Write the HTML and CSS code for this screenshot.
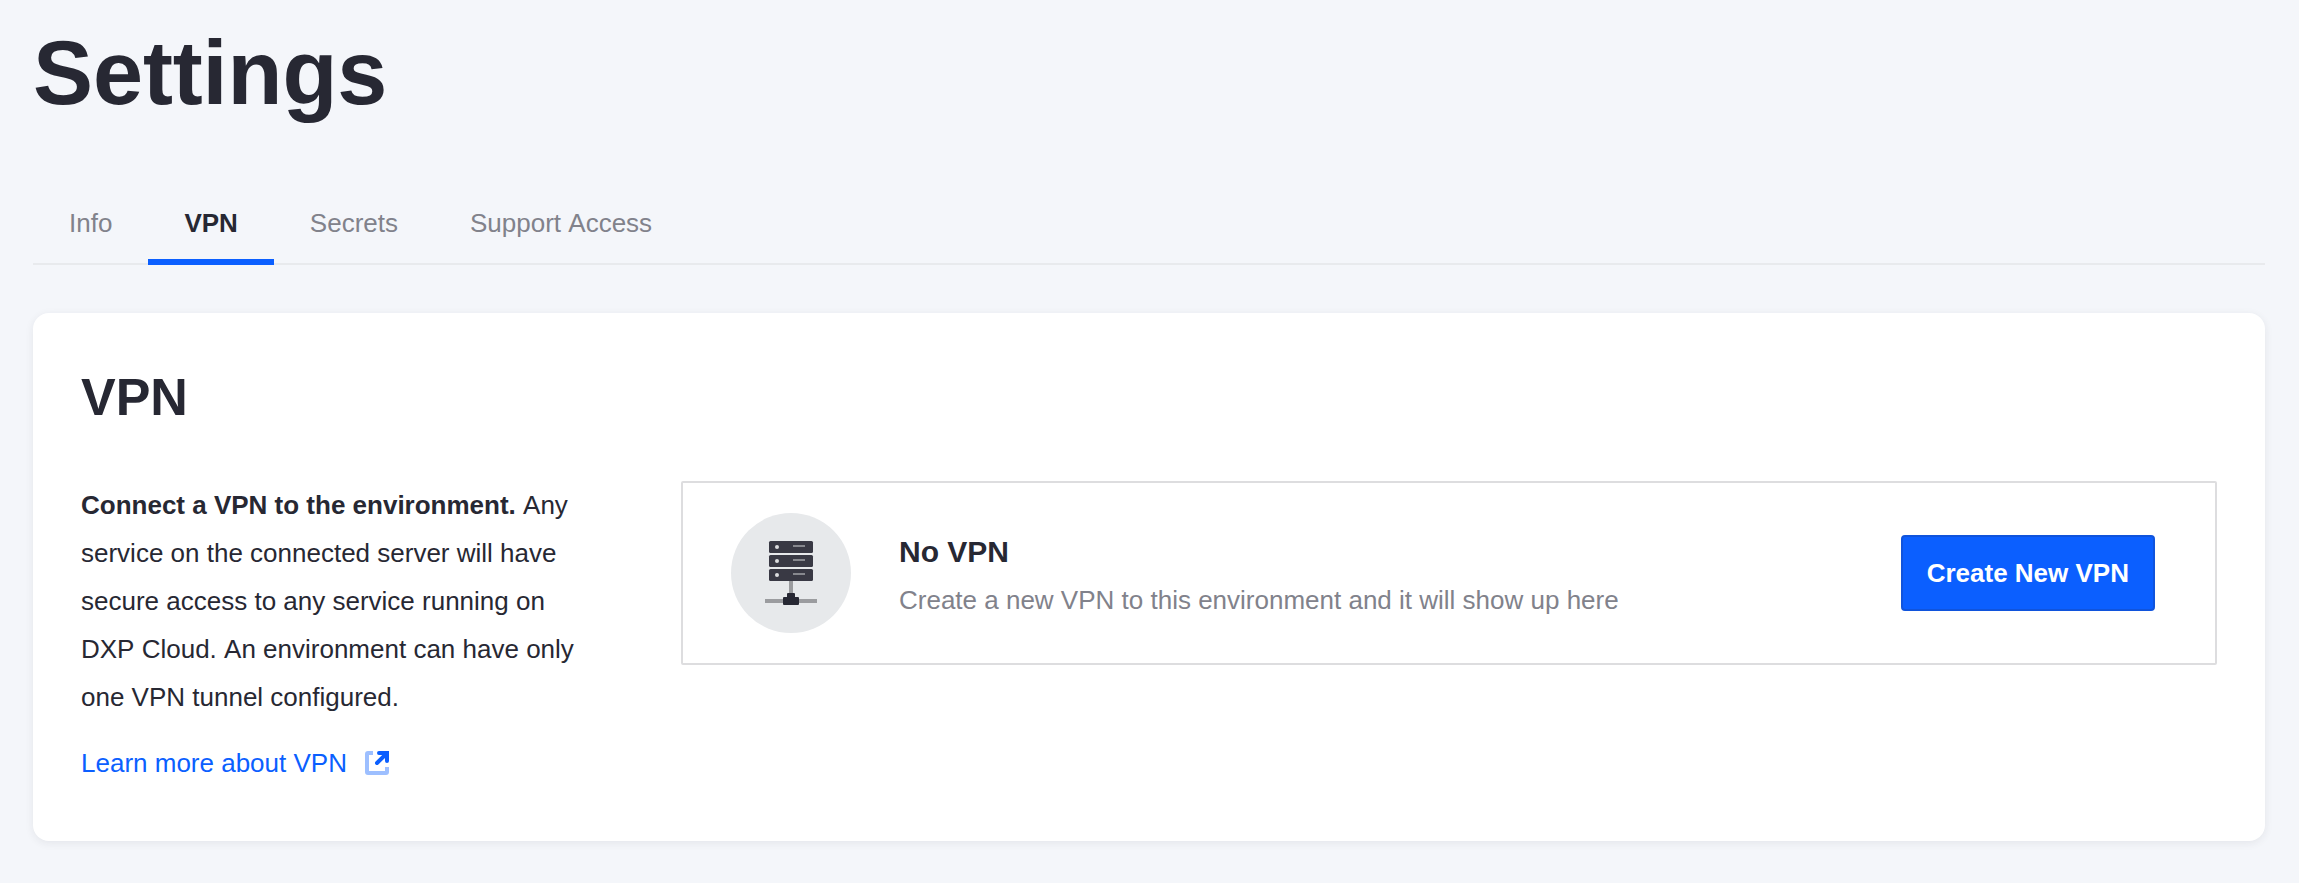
FILE: index.html
```html
<!DOCTYPE html>
<html lang="en">
<head>
<meta charset="utf-8">
<title>Settings</title>
<link rel="stylesheet" href="styles.css">
</head>
<body>
<main class="page">
  <h1 class="page-title">Settings</h1>
  <nav class="tabs">
    <a class="tab">Info</a>
    <a class="tab tab-active">VPN</a>
    <a class="tab">Secrets</a>
    <a class="tab">Support Access</a>
  </nav>
  <section class="card">
    <h2 class="card-title">VPN</h2>
    <div class="card-body">
      <div class="about">
        <p class="about-text"><strong>Connect a VPN to the environment.</strong> Any service on the connected server will have secure access to any service running on DXP Cloud. An environment can have only one VPN tunnel configured.</p>
        <a class="learn-more">Learn more about VPN
          <svg class="link-icon" viewBox="0 0 24 24" width="24" height="24">
            <path d="M8 0H3a3 3 0 0 0-3 3v18a3 3 0 0 0 3 3h18a3 3 0 0 0 3-3v-5h-4v4H4V4h4z" fill="#9dbfff"/>
            <path d="M14 0H24V10a2 2 0 0 1-4 0V7L13.400 13.400a1.900 1.900 0 0 1-2.800-2.800L17.200 4H14a2 2 0 0 1 0-4z" fill="#0b5fff"/>
          </svg>
        </a>
      </div>
      <div class="empty">
        <svg class="server-icon" viewBox="0 0 120 120" width="120" height="120">
          <circle cx="60" cy="60" r="60" fill="#e7e9eb"/>
          <path d="M58 68h4v13h-4zM34 86h52v4H34z" fill="#9b9c9f"/>
          <g fill="#393944">
            <rect x="38" y="28" width="44" height="12" rx="1.500"/>
            <rect x="38" y="42" width="44" height="12" rx="1.500"/>
            <rect x="38" y="56" width="44" height="12" rx="1.500"/>
          </g>
          <g fill="#dcddde">
            <circle cx="46" cy="34" r="2"/>
            <circle cx="46" cy="48" r="2"/>
            <circle cx="46" cy="62" r="2"/>
          </g>
          <path d="M62 32h12v2H62zM62 46h12v2H62zM62 60h12v2H62z" fill="#87888e"/>
          <path d="M57 80h6a1 1 0 0 1 1 1v3h3a1 1 0 0 1 1 1v6a1 1 0 0 1-1 1H53a1 1 0 0 1-1-1v-6a1 1 0 0 1 1-1h3v-3a1 1 0 0 1 1-1z" fill="#272833"/>
        </svg>
        <div class="empty-text">
          <h3 class="empty-title">No VPN</h3>
          <p class="empty-note">Create a new VPN to this environment and it will show up here</p>
        </div>
        <button class="create">Create New VPN</button>
      </div>
    </div>
  </section>
</main>
</body>
</html>
```

FILE: styles.css
```css
* { box-sizing: border-box; margin: 0; padding: 0; }
body {
  background: #f4f6fa;
  color: #272833;
  font-family: "Liberation Sans", Arial, sans-serif;
  font-size: 26px;
  font-kerning: none;
}
.page { height: 883px; padding: 23px 34px 0 33px; }
.page-title { font-size: 90px; line-height: 100px; letter-spacing: -0.1px; }
.tabs {
  display: flex;
  height: 84px;
  margin-top: 58px;
  border-bottom: 2px solid #e8eaed;
}
.tab {
  height: 84px;
  padding: 0 36px;
  color: #81828b;
  line-height: 84px;
}
.tab-active {
  border-bottom: 6px solid #0b5fff;
  color: #272833;
  font-weight: bold;
}
.card {
  height: 528px;
  margin-top: 48px;
  padding: 48px;
  border-radius: 16px;
  background: #fff;
  box-shadow: 0 2px 8px rgba(39, 40, 51, 0.08);
}
.card-title { font-size: 52px; line-height: 72px; }
.card-body {
  display: grid;
  grid-template-columns: 504px 1fr;
  column-gap: 96px;
  align-items: start;
  margin-top: 48px;
}
.about-text { line-height: 48px; }
.learn-more {
  display: flex;
  align-items: center;
  gap: 18px;
  margin-top: 18px;
  color: #0b5fff;
  line-height: 48px;
}
.empty {
  display: flex;
  align-items: center;
  height: 184px;
  padding: 0 60px 0 48px;
  border: 2px solid #dddddf;
  border-radius: 2px;
}
.empty-text { flex: 1; margin-left: 48px; padding-top: 6px; }
.empty-title { font-size: 30px; line-height: 48px; }
.empty-note { color: #81828b; line-height: 48px; }
.create {
  height: 76px;
  padding: 0 24px;
  border: 2px solid #1054dc;
  border-radius: 4px;
  background: #0b5fff;
  color: #fff;
  font: bold 26px "Liberation Sans", Arial, sans-serif;
  white-space: nowrap;
}
```
